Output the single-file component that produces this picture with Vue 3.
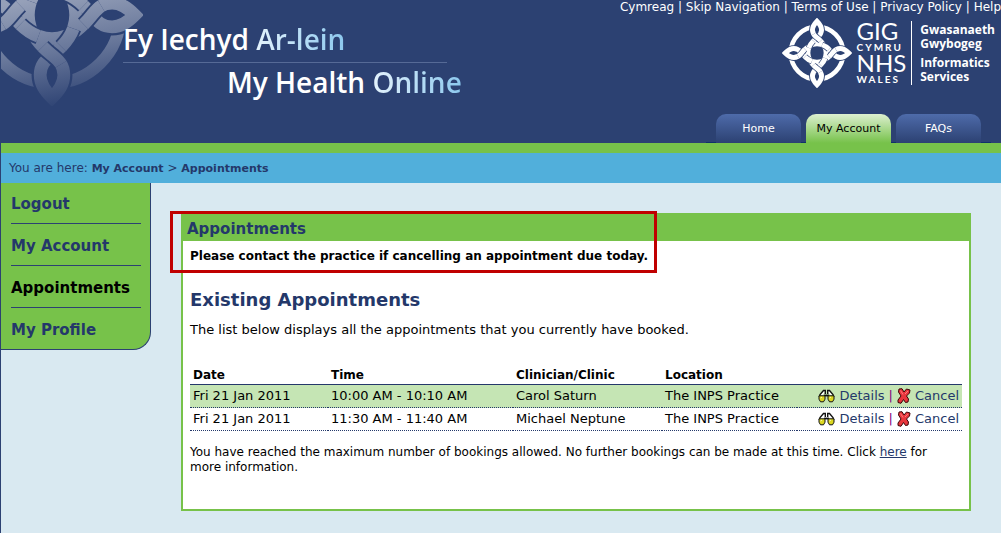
<template>
  <div class="page">
    <svg class="defs" width="0" height="0" aria-hidden="true">
      <defs>
        <path id="strand" pathLength="100" d="M0,91 C-8,83 -13,76 -13,66 C-13,54 -6,49 0,44 C10,36 26,22 26,0" />
        <symbol id="knot" viewBox="-100 -100 200 200">
          <circle class="ring" r="75" />
          <g v-for="a in quarters" :key="'loop' + a" :transform="`rotate(${a})`">
            <path class="clear" d="M0,91 C-8,83 -13,76 -13,66 C-13,54 -6,49 0,44 C6,49 13,54 13,66 C13,76 8,83 0,91Z" />
          </g>
          <g v-for="a in quarters" :key="'base' + a" :transform="`rotate(${a})`">
            <path class="band" d="M26,0 C26,22 10,36 0,44 C-6,49 -13,54 -13,66 C-13,76 -8,83 0,91 C8,83 13,76 13,66 C13,54 6,49 0,44 C-10,36 -26,22 -26,0" />
          </g>
          <g v-for="a in quarters" :key="'over' + a" :transform="`rotate(${a})`">
            <g transform="scale(-1 1)">
              <use href="#strand" class="gap cross" />
              <use href="#strand" class="band cross" />
            </g>
            <use href="#strand" class="gap bridge" />
            <use href="#strand" class="band bridge" />
          </g>
        </symbol>
        <linearGradient id="fade" x1="0.2" y1="0" x2="0.45" y2="1">
          <stop offset="0" stop-color="#2c4172" stop-opacity="0.5" />
          <stop offset="0.5" stop-color="#2c4172" stop-opacity="0.72" />
          <stop offset="1" stop-color="#2c4172" stop-opacity="1" />
        </linearGradient>
      </defs>
    </svg>

    <header class="header">
      <svg class="watermark" width="144" height="108" viewBox="0 0 144 108" aria-hidden="true">
        <use href="#knot" x="-40" y="-76" width="182" height="182" />
        <rect width="144" height="108" fill="url(#fade)" />
      </svg>

      <div class="brand">
        <div class="brand-line">Fy Iechyd <span class="tint">Ar-lein</span></div>
        <div class="brand-line second">My Health <span class="tint">Online</span></div>
      </div>

      <div class="header-side">
        <nav class="links" aria-label="Site links">
          <template v-for="(link, i) in links" :key="link">
            <span v-if="i"> | </span><a href="#">{{ link }}</a>
          </template>
        </nav>
        <div class="logo">
          <svg width="70" height="70" viewBox="0 0 70 70" aria-hidden="true">
            <use href="#knot" width="70" height="70" />
          </svg>
          <div class="logo-name">
            <div class="big">GIG</div>
            <div class="small">CYMRU</div>
            <div class="big">NHS</div>
            <div class="small">WALES</div>
          </div>
          <div class="logo-dept">
            <div>Gwasanaeth<br />Gwybogeg</div>
            <div>Informatics<br />Services</div>
          </div>
        </div>
        <nav class="tabs" aria-label="Main">
          <a v-for="tab in tabs" :key="tab" href="#" class="tab" :class="{ active: tab === 'My Account' }">{{ tab }}</a>
        </nav>
      </div>
    </header>

    <div class="breadcrumb">You are here: <b>My Account</b> &gt; <b>Appointments</b></div>

    <div class="columns">
      <ul class="sidebar">
        <li v-for="item in menu" :key="item">
          <a href="#" :class="{ current: item === 'Appointments' }">{{ item }}</a>
        </li>
      </ul>

      <main class="panel">
        <h1>Appointments</h1>
        <div class="panel-body">
          <p class="notice">Please contact the practice if cancelling an appointment due today.</p>
          <h2>Existing Appointments</h2>
          <p>The list below displays all the appointments that you currently have booked.</p>

          <table>
            <thead>
              <tr>
                <th class="date">Date</th>
                <th class="time">Time</th>
                <th class="clinician">Clinician/Clinic</th>
                <th>Location</th>
                <th></th>
              </tr>
            </thead>
            <tbody>
              <tr v-for="row in appointments" :key="row.time">
                <td>{{ row.date }}</td>
                <td>{{ row.time }}</td>
                <td>{{ row.clinician }}</td>
                <td>{{ row.location }}</td>
                <td>
                  <div class="actions">
                    <svg width="17" height="14" viewBox="0 0 17 14" aria-hidden="true">
                      <path d="M3.500 6 L6.500 2.500 M13.500 6 L10.500 2.500" stroke="#fff" stroke-width="1.500" />
                      <path d="M1.200 8 L2 5.500 L5.500 1.500 L7.300 1.500 V5 M15.800 8 L15 5.500 L11.500 1.500 L9.700 1.500 V5" fill="none" stroke="#111" stroke-width="1.400" />
                      <path d="M6 6.500 H11" stroke="#111" stroke-width="1.800" />
                      <path d="M1 6.800 H7 V10.200 L5.500 12.800 H2.500 L1 10.200Z M10 6.800 H16 V10.200 L14.500 12.800 H11.500 L10 10.200Z" fill="#dcd820" stroke="#111" stroke-linejoin="round" />
                      <path d="M2.500 9 L4 8 M11.500 9 L13 8" stroke="#fffcb8" />
                    </svg>
                    <a href="#">Details</a>
                    <span class="bar">|</span>
                    <svg width="14" height="16" viewBox="0 0 14 16" aria-hidden="true">
                      <path d="M2 1 L5 0.700 L7 4 L9.500 1 L13 2 L12.500 5 L9.500 8 L11.500 11 L11 14 L8.500 14.500 L6.500 11.500 L4 15.300 L1 14.500 L1 12 L4 8 L1.500 4Z" fill="#e8363c" stroke="#3d0508" stroke-linejoin="round" />
                      <path d="M3.500 2.500 L6 6.500 M8 6 L11 3" fill="none" stroke="#ff7a7c" />
                    </svg>
                    <a href="#">Cancel</a>
                  </div>
                </td>
              </tr>
            </tbody>
          </table>

          <p class="limit">
            You have reached the maximum number of bookings allowed. No further bookings can be made at this time. Click
            <a href="#">here</a> for more information.
          </p>
        </div>
        <div class="highlight"></div>
      </main>
    </div>
  </div>
</template>

<script setup>
const quarters = [0, 90, 180, 270]

const links = ['Cymreag', 'Skip Navigation', 'Terms of Use', 'Privacy Policy', 'Help']
const tabs = ['Home', 'My Account', 'FAQs']
const menu = ['Logout', 'My Account', 'Appointments', 'My Profile']

const appointments = [
  { date: 'Fri 21 Jan 2011', time: '10:00 AM - 10:10 AM', clinician: 'Carol Saturn', location: 'The INPS Practice' },
  { date: 'Fri 21 Jan 2011', time: '11:30 AM - 11:40 AM', clinician: 'Michael Neptune', location: 'The INPS Practice' }
]
</script>

<style>
body {
  margin: 0;
  background: #d9e9f1;
}
</style>

<style scoped>
.page {
  min-height: 100vh;
  box-sizing: border-box;
  border-left: 1px solid #2c4172;
  font-family: Verdana, "DejaVu Sans", sans-serif;
  font-size: 13px;
  color: #000;
}

.defs {
  position: absolute;
}

/* knot */
.ring {
  fill: none;
  stroke: #fff;
  stroke-width: 13;
}

.clear {
  fill: #2c4172;
  stroke: #2c4172;
  stroke-width: 19;
}

.band,
.gap {
  fill: none;
  stroke: #fff;
  stroke-width: 14;
}

.gap {
  stroke: #2c4172;
  stroke-width: 18;
}

.cross {
  stroke-dasharray: 0 38 26 100;
}

.bridge {
  stroke-dasharray: 0 64 22 100;
}

/* header */
.header {
  position: relative;
  display: flex;
  justify-content: space-between;
  background: #2c4172;
  border-bottom: 10px solid #77c24a;
  color: #fff;
}

.watermark {
  position: absolute;
  left: 0;
  top: 0;
}

.brand {
  position: relative;
  padding: 16px 0 0 122px;
  font-family: "Open Sans", "Noto Sans", sans-serif;
  font-size: 28px;
  font-weight: 600;
}

.brand-line {
  width: 324px;
  white-space: nowrap;
  border-bottom: 1px solid #566a96;
  line-height: 46px;
}

.brand-line.second {
  border: 0;
  padding-left: 104px;
  line-height: 38px;
}

.tint {
  background: linear-gradient(90deg, #e4f3fd, #8cc8ee);
  -webkit-background-clip: text;
  background-clip: text;
  color: transparent;
}

.header-side {
  display: flex;
  flex-direction: column;
  align-items: flex-end;
}

.links {
  font-size: 12px;
  line-height: 14px;
  white-space: nowrap;
}

.links a {
  color: #fff;
  text-decoration: none;
}

.logo {
  display: flex;
  align-items: center;
  height: 78px;
  padding-right: 6px;
}

.logo-name {
  padding: 0 5px;
  border-right: 1px solid #fff;
  font-family: Lato, sans-serif;
}

.big {
  font-size: 24px;
  line-height: 20px;
}

.small {
  font-size: 10px;
  font-weight: 700;
  line-height: 12px;
  letter-spacing: 2px;
}

.logo-dept {
  padding-left: 8px;
  font-family: "Open Sans", "Noto Sans", sans-serif;
  font-size: 12px;
  font-weight: 700;
  line-height: 14px;
}

.logo-dept div + div {
  margin-top: 5px;
}

.tabs {
  display: flex;
  gap: 5px;
  margin: 22px 10px 0 0;
  padding: 0 10px;
  box-shadow: inset 0 -1px #0f316a;
}

.tab {
  width: 85px;
  border-radius: 10px 10px 0 0;
  background: linear-gradient(#4e6baa, #2c4172);
  color: #fff;
  font-size: 11px;
  line-height: 29px;
  text-align: center;
  text-decoration: none;
}

.tab.active {
  background: linear-gradient(#dcefd0, #77c24a);
  color: #000;
}

.breadcrumb {
  padding-left: 8px;
  background: #51afdb;
  color: #24386a;
  font-size: 12px;
  line-height: 30px;
}

.breadcrumb b {
  font-size: 11px;
  line-height: 14px;
}

/* body */
.columns {
  display: flex;
  align-items: flex-start;
}

.sidebar {
  flex: none;
  box-sizing: border-box;
  width: 150px;
  margin: 0;
  padding: 0 9px 0 10px;
  list-style: none;
  background: #77c24a;
  border: solid #2c4172;
  border-width: 0 1px 1px 0;
  border-bottom-right-radius: 18px;
}

.sidebar li {
  padding-top: 2px;
}

.sidebar li + li {
  border-top: 1px solid #2c4172;
  padding-top: 3px;
}

.sidebar a {
  display: block;
  color: #24386a;
  font-size: 15px;
  font-weight: 700;
  line-height: 38px;
  text-decoration: none;
}

.sidebar a.current {
  color: #000;
}

.panel {
  position: relative;
  flex: 1;
  margin: 30px;
  margin-bottom: 23px;
  border: 2px solid #77c24a;
  border-top: 0;
  background: #fff;
}

h1 {
  margin: 0;
  padding: 4px 4px 0;
  background: #77c24a;
  color: #24386a;
  font-size: 15px;
  line-height: 24px;
}

.panel-body {
  padding: 7px 7px 34px;
}

p {
  margin: 0;
  line-height: 16px;
}

.notice {
  font-size: 12px;
  font-weight: 700;
}

h2 {
  margin: 24px 0 10px;
  color: #24386a;
  font-size: 18px;
  line-height: 24px;
}

table {
  width: 100%;
  margin-top: 28px;
  border-collapse: collapse;
}

th,
td {
  padding: 0 3px 1px;
  height: 21px;
  text-align: left;
  white-space: nowrap;
  border-bottom: 1px dotted #24386a;
}

th {
  height: 18px;
  padding-bottom: 0;
  font-size: 12px;
  border-bottom: 1px solid #24386a;
}

.date {
  width: 132px;
}

.time {
  width: 179px;
}

.clinician {
  width: 143px;
}

tbody tr:nth-child(odd) {
  background: #c5e5b4;
}

.actions {
  display: flex;
  align-items: center;
  justify-content: flex-end;
  gap: 4px;
}

.actions a {
  color: #24386a;
  text-decoration: none;
}

.bar {
  color: #800080;
}

.limit {
  margin-top: 14px;
  padding-right: 12px;
  font-size: 12px;
  line-height: 15px;
}

.limit a {
  color: #24386a;
}

.highlight {
  position: absolute;
  top: -2px;
  left: -13px;
  box-sizing: border-box;
  width: 487px;
  height: 62px;
  border: 3px solid #c00000;
}
</style>
